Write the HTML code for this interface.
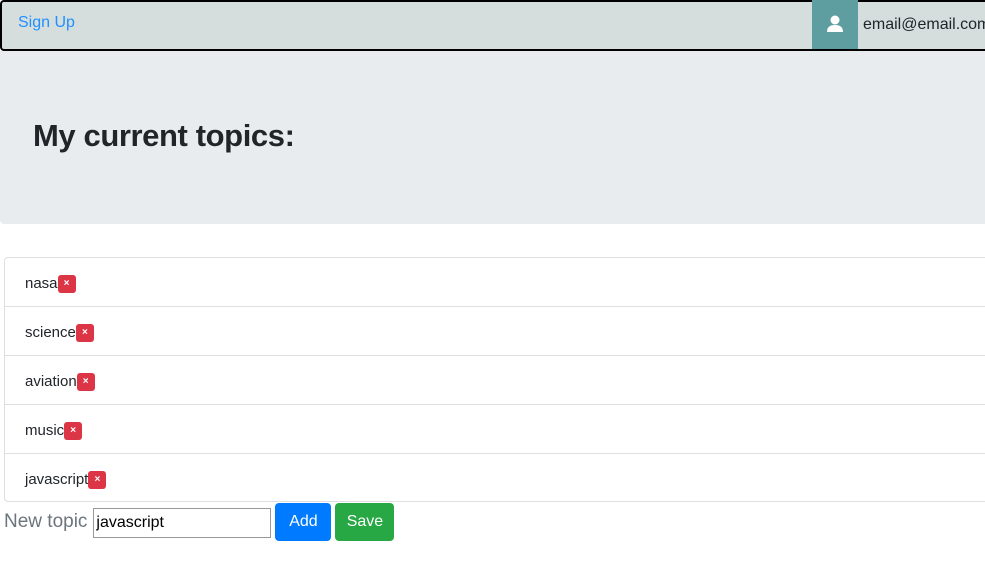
<!DOCTYPE html>
<html><head><style>
*{box-sizing:border-box}
body{margin:0;width:985px;height:582px;overflow:hidden;background:#fff;font-family:"Liberation Sans",sans-serif;color:#212529}
.nav{position:absolute;left:0;top:0;width:1000px;height:51px;background:#d6dedd;border:2px solid #000;border-radius:4px}
.nav a{position:absolute;left:16px;top:12px;color:#1e90ff;font-size:16px;text-decoration:none}
.user{position:absolute;left:812px;top:0;width:46px;height:49px;background:#5f9ea0}
.email{position:absolute;left:863px;top:16px;font-size:16px;color:#212529;white-space:nowrap}
.jumbo{position:absolute;left:0;top:51px;width:1000px;height:173px;background:#e9ecef;border-radius:0 0 4px 4px}
.jumbo h1{position:absolute;left:33px;top:67px;margin:0;font-size:31px;font-weight:bold;letter-spacing:-0.4px}
.list{position:absolute;left:4px;top:257px;width:1000px;border:1px solid #dfdfdf;border-radius:4px}
.item{height:49px;border-bottom:1px solid #dfdfdf;padding:17px 0 0 20px;font-size:15px;line-height:17px}
.item:last-child{border-bottom:none;height:47px}
.x{display:inline-block;width:18px;height:18px;background:#dc3545;border-radius:3px;color:#fff;font-size:10px;text-align:center;line-height:18px;vertical-align:middle;position:relative;top:0px;font-weight:bold}
.row{position:absolute;left:4px;top:503px;display:flex;align-items:center}
.lbl{font-size:19px;color:#6c757d;font-weight:300;margin-right:6px}
input{width:178px;height:30px;border:1px solid #999;font:16px "Liberation Sans",sans-serif;padding:1px 2px;margin-top:2px}
.btn{color:#fff;font-size:16px;border-radius:4px;height:38px;line-height:38px;text-align:center;margin-left:4px}
</style></head><body>
<div class="nav"><a>Sign Up</a></div>
<div class="user"><svg width="46" height="49" viewBox="0 0 46 49"><circle cx="23" cy="20" r="4.5" fill="#fff"/><path d="M15 32c0-5 3-7 8-7s8 2 8 7z" fill="#fff"/></svg></div>
<div class="email">email@email.com</div>
<div class="jumbo"><h1>My current topics:</h1></div>
<div class="list">
<div class="item">nasa<span class="x">×</span></div>
<div class="item">science<span class="x">×</span></div>
<div class="item">aviation<span class="x">×</span></div>
<div class="item">music<span class="x">×</span></div>
<div class="item">javascript<span class="x">×</span></div>
</div>
<div class="row"><span class="lbl">New topic</span><input value="javascript"><div class="btn" style="background:#007bff;width:56px">Add</div><div class="btn" style="background:#28a745;width:59px">Save</div></div>
</body></html>
